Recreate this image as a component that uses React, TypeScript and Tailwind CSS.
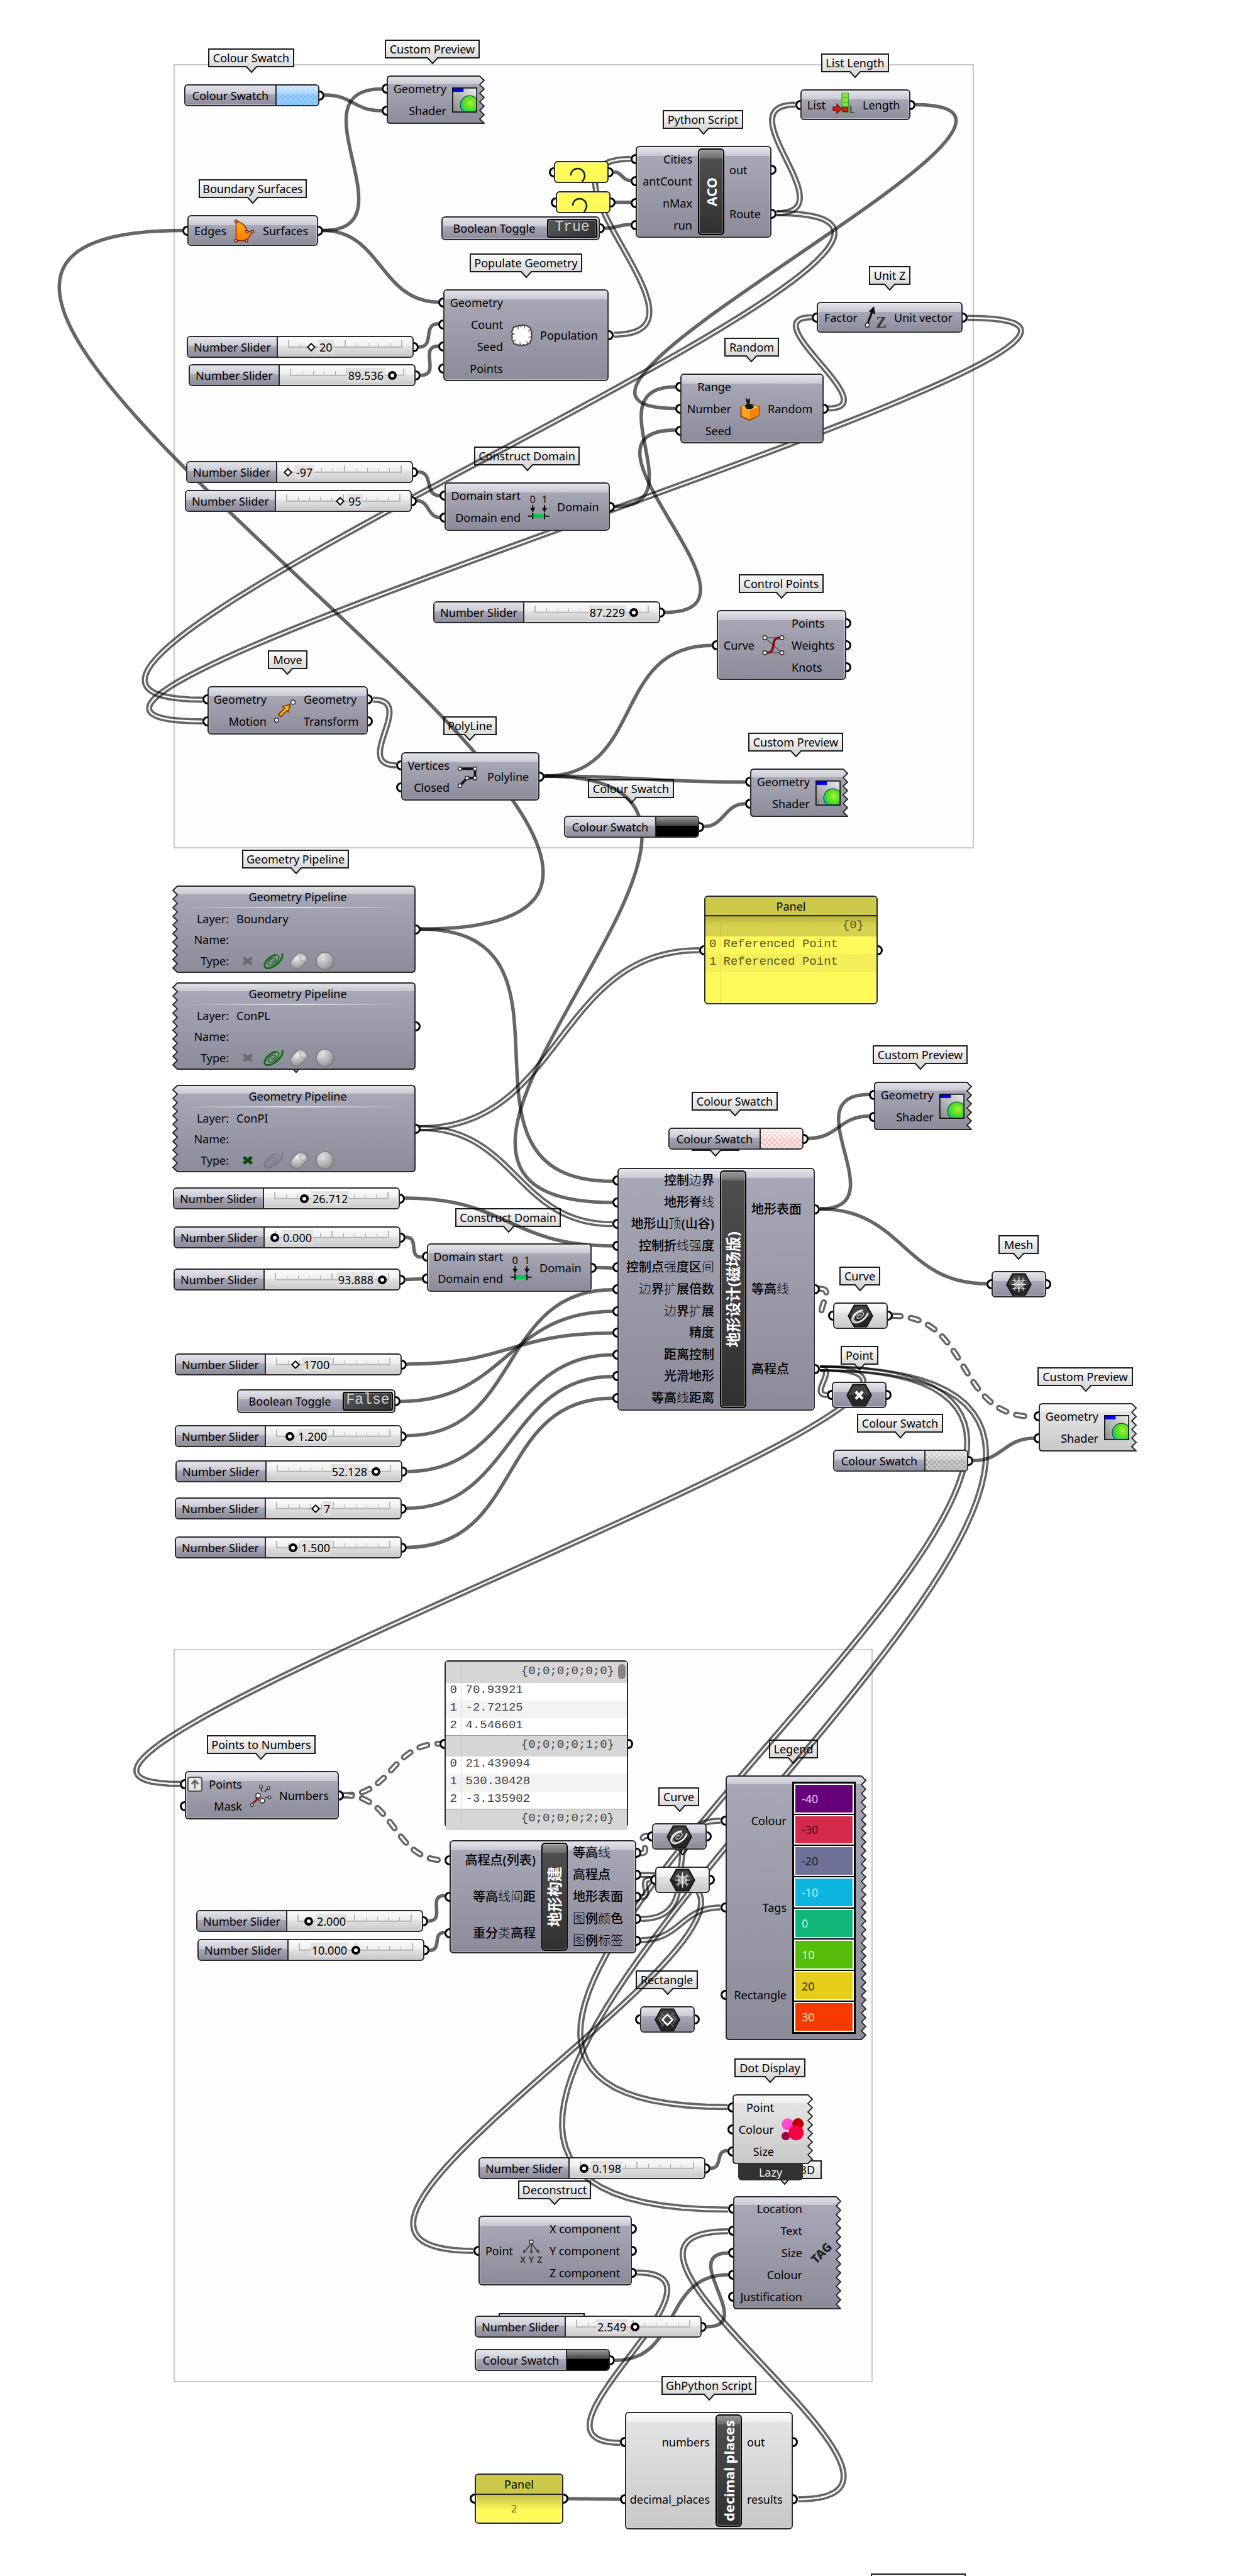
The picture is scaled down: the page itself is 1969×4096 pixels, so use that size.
import React from "react";

/* Canvas zoom: every node, label and wire below is stored in canvas units. */
const ZOOM = 0.8624;
const u = (n: number) => Math.round(n * ZOOM);
const box = (x: number, y: number, w: number, h: number) => ({
  left: u(x),
  top: u(y),
  width: u(w),
  height: u(h),
});

type Tone = "grey" | "light";

const FILL: Record<Tone, string> = {
  grey: "bg-[linear-gradient(180deg,#e4e4eb_0px,#c9c9d2_14px,#a8a7b6_14px,#8c8b9a_100%)]",
  light: "bg-[linear-gradient(180deg,#fbfbfb_0px,#efefef_14px,#e4e4e4_14px,#c8c8c8_100%)]",
};
const GLOSS = "bg-[linear-gradient(180deg,rgba(255,255,255,0.6)_0px,rgba(255,255,255,0.25)_14px,rgba(255,255,255,0)_14px)]";
const FRAME = "rounded-md border-2 border-[#2a2a2a] shadow-[inset_0_0_0_1px_rgba(255,255,255,0.45)]";

/* ---------------------------------------------------------------- wires */

type Kind = "item" | "list" | "tree";
type Wire = [number, number, number, number, Kind, number?];

const WIRES: Wire[] = [
  [598, 175, 704, 204, "item"],
  [596, 425, 704, 164, "item", 168],
  [596, 425, 809, 557, "item"],
  [772, 640, 809, 597, "item"],
  [776, 692, 809, 638, "item"],
  [1132, 617, 1163, 293, "list"],
  [1132, 317, 1163, 333, "item"],
  [1134, 373, 1163, 373, "item"],
  [1115, 421, 1163, 414, "item"],
  [1432, 393, 1467, 193, "list"],
  [1432, 393, 374, 1290, "list", 620],
  [1688, 193, 1246, 753, "item", 380],
  [1527, 753, 1497, 585, "list"],
  [1784, 586, 374, 1330, "list", 640],
  [1226, 1129, 1246, 793, "item"],
  [1134, 934, 1246, 713, "item"],
  [770, 870, 812, 914, "item"],
  [768, 923, 812, 954, "item"],
  [688, 1290, 731, 1411, "list"],
  [1004, 1431, 1313, 1190, "item"],
  [1004, 1431, 1374, 1442, "item"],
  [1004, 1431, 1130, 2217, "item", 568],
  [1298, 1524, 1374, 1482, "item"],
  [774, 1713, 337, 425, "item", 935],
  [774, 1713, 1130, 2178, "item"],
  [774, 2080, 1290, 1752, "list"],
  [774, 2080, 1130, 2257, "list"],
  [746, 2209, 1130, 2297, "item"],
  [748, 2281, 778, 2318, "item"],
  [748, 2359, 778, 2358, "item"],
  [1100, 2337, 1130, 2338, "item"],
  [750, 2515, 1130, 2458, "item"],
  [738, 2584, 1130, 2418, "item"],
  [750, 2647, 1130, 2378, "item"],
  [752, 2713, 1130, 2498, "item"],
  [750, 2781, 1130, 2538, "item"],
  [750, 2853, 1130, 2578, "item"],
  [1490, 2099, 1603, 2058, "item"],
  [1512, 2229, 1603, 2018, "item"],
  [1512, 2229, 1820, 2367, "item"],
  [1512, 2376, 1527, 2426, "tree"],
  [1646, 2426, 1907, 2612, "tree"],
  [1512, 2523, 1525, 2572, "list"],
  [1512, 2523, 332, 3289, "list", 525],
  [1512, 2523, 1342, 3885, "list", 1005],
  [1512, 2523, 1343, 4074, "list", 1125],
  [1794, 2693, 1907, 2652, "item"],
  [1182, 3417, 1193, 3385, "tree"],
  [1182, 3457, 873, 4150, "list", 482],
  [1182, 3498, 1199, 3465, "list"],
  [1182, 3538, 1329, 3357, "list"],
  [1182, 3577, 1329, 3517, "list"],
  [634, 3310, 811, 3215, "tree"],
  [634, 3310, 820, 3430, "tree"],
  [790, 3542, 820, 3495, "item"],
  [792, 3596, 820, 3563, "item"],
  [1310, 3998, 1342, 3965, "item"],
  [1174, 4190, 1144, 4504, "list"],
  [1472, 4608, 1343, 4114, "list", 335],
  [1304, 4290, 1343, 4154, "item"],
  [1134, 4352, 1343, 4194, "item"],
  [1047, 4607, 1144, 4608, "item"],
];

/* Polyline running parallel to a horizontal-tangent bezier. */
function parallel([x0, y0, x1, y1]: Wire, d: number, offset: number) {
  const pts: string[] = [];
  const n = 72;
  for (let i = 0; i <= n; i++) {
    const t = i / n;
    const s = 1 - t;
    const x = s * s * s * x0 + 3 * s * s * t * (x0 + d) + 3 * s * t * t * (x1 - d) + t * t * t * x1;
    const y = s * s * s * y0 + 3 * s * s * t * y0 + 3 * s * t * t * y1 + t * t * t * y1;
    const dx = 3 * s * s * d + 6 * s * t * (x1 - d - (x0 + d)) + 3 * t * t * d;
    const dy = 6 * s * t * (y1 - y0);
    const len = Math.hypot(dx, dy) || 1;
    pts.push(`${(x - (dy / len) * offset).toFixed(1)} ${(y + (dx / len) * offset).toFixed(1)}`);
  }
  return "M" + pts.join("L");
}

function WireLayer() {
  return (
    <svg className="absolute inset-0 h-full w-full" fill="none" aria-hidden="true">
      <g transform={`scale(${ZOOM})`}>
        {WIRES.map((w, i) => {
          const [x0, y0, x1, y1, kind, reach] = w;
          const d = reach ?? Math.max((x1 - x0) / 2, Math.abs(y1 - y0) * 0.65 + Math.abs(x1 - x0) * 0.1);
          const path = `M${x0} ${y0}C${x0 + d} ${y0} ${x1 - d} ${y1} ${x1} ${y1}`;
          if (kind === "item") return <path key={i} d={path} stroke="#000" strokeOpacity=".6" strokeWidth="6.4" />;
          if (kind === "tree")
            return (
              <g key={i} strokeLinecap="round" strokeDasharray="15 19">
                <path d={path} stroke="#666" strokeWidth="11.4" />
                <path d={path} stroke="#fff" strokeWidth="3.6" />
              </g>
            );
          return (
            <g key={i} stroke="#000" strokeOpacity=".6" strokeWidth="4.2">
              <path d={parallel(w, d, 3.6)} />
              <path d={parallel(w, d, -3.6)} />
            </g>
          );
        })}
      </g>
    </svg>
  );
}

/* --------------------------------------------------------------- labels */

type Tag = [string, number, number, number, number];

/* Tags with no text are the ones whose face is covered by a node. */
const TAGS: Tag[] = [
  ["Colour Swatch", 384, 89, 159, 464],
  ["Custom Preview", 710, 73, 175, 798],
  ["Boundary Surfaces", 366, 331, 199, 466],
  ["Populate Geometry", 866, 467, 207, 970],
  ["Python Script", 1222, 203, 149, 1297],
  ["List Length", 1514, 99, 125, 1577],
  ["Unit Z", 1602, 491, 77, 1640],
  ["Random", 1336, 623, 101, 1386],
  ["Construct Domain", 874, 823, 195, 972],
  ["Move", 494, 1199, 73, 530],
  ["PolyLine", 818, 1321, 99, 867],
  ["Colour Swatch", 1084, 1437, 159, 1164],
  ["Control Points", 1362, 1059, 157, 1441],
  ["Custom Preview", 1380, 1351, 175, 1468],
  ["Geometry Pipeline", 446, 1567, 197, 546],
  ["", 448, 1933, 197, 547],
  ["", 1276, 2087, 88, 1320],
  ["Colour Swatch", 1276, 2013, 159, 1356],
  ["Custom Preview", 1610, 1927, 175, 1698],
  ["Construct Domain", 840, 2227, 195, 938],
  ["Curve", 1548, 2335, 75, 1586],
  ["Point", 1550, 2481, 69, 1585],
  ["Mesh", 1841, 2277, 74, 1878],
  ["Custom Preview", 1913, 2521, 176, 2002],
  ["Colour Swatch", 1580, 2607, 159, 1660],
  ["Points to Numbers", 382, 3199, 201, 482],
  ["", 956, 3328, 88, 1000],
  ["Legend", 1418, 3207, 91, 1463],
  ["Curve", 1214, 3295, 75, 1253],
  ["", 1222, 3376, 74, 1259],
  ["Rectangle", 1172, 3633, 115, 1231],
  ["Dot Display", 1354, 3795, 131, 1420],
  ["Text Tag 3D", 1378, 3983, 138, 1447],
  ["Deconstruct", 956, 4020, 135, 1023],
  ["", 920, 4265, 159, 1000],
  ["GhPython Script", 1220, 4381, 175, 1308],
  ["", 1606, 4745, 175, 1694],
];

function TagBubble({ tag: [text, x, y, w, tip] }: { tag: Tag }) {
  return (
    <div
      className="absolute flex items-center justify-center border-2 border-[#1a1a1a] bg-[linear-gradient(180deg,#fbfbfb,#dadada)] leading-none whitespace-nowrap"
      style={box(x, y, w, 35)}
    >
      {text}
      <svg className="absolute top-full h-3 w-5" style={{ left: u(tip - x) - 12 }} viewBox="0 0 20 12" aria-hidden="true">
        <path d="M0 -2H20V0H18L10 10L2 0H0Z" fill="#dadada" />
        <path d="M0 -1 1 0 10 10 19 0 20 -1" fill="none" stroke="#1a1a1a" strokeWidth="2" />
      </svg>
    </div>
  );
}

/* ---------------------------------------------------------------- icons */

const Dot = ({ x, y, r = 1.9 }: { x: number; y: number; r?: number }) => (
  <circle cx={x} cy={y} r={r} fill="#fff" stroke="#333" strokeWidth="1.1" />
);

/* Squashed spiral around (cx, cy), from angle a to b in turns. */
function spiral(cx: number, cy: number, rMax: number, squash: number, a: number, b: number, turns: number) {
  const pts: string[] = [];
  const steps = 48;
  for (let i = 0; i <= steps; i++) {
    const k = a + ((b - a) * i) / steps;
    const r = rMax * (0.12 + (0.88 * k) / turns);
    const t = k * Math.PI * 2;
    pts.push(`${(cx + r * Math.cos(t)).toFixed(1)} ${(cy - r * squash * Math.sin(t)).toFixed(1)}`);
  }
  return "M" + pts.join("L");
}

function PreviewIcon() {
  return (
    <svg className="size-10 shrink-0" viewBox="0 0 46 46" aria-hidden="true">
      <defs>
        <linearGradient id="pv-bg" x1="0" y1="1" x2="1" y2="0">
          <stop offset="0" stopColor="#8a8a8a" />
          <stop offset="1" stopColor="#ececec" />
        </linearGradient>
        <radialGradient id="pv-ball" cx=".55" cy=".4" r=".62">
          <stop offset="0" stopColor="#b4f660" />
          <stop offset=".2" stopColor="#84ea2c" />
          <stop offset=".6" stopColor="#50dc20" />
          <stop offset=".85" stopColor="#14c878" />
          <stop offset="1" stopColor="#20d8d0" />
        </radialGradient>
        <clipPath id="pv-clip">
          <rect x="1" y="1" width="44" height="44" />
        </clipPath>
      </defs>
      <rect x="1" y="1" width="44" height="44" fill="url(#pv-bg)" />
      <rect x="1" y="1" width="20" height="7" fill="#0404f4" />
      <g clipPath="url(#pv-clip)">
        <circle cx="32" cy="32" r="17" fill="url(#pv-ball)" stroke="#14505c" strokeWidth="1.500" />
      </g>
      <rect x="1" y="1" width="44" height="44" fill="none" stroke="#111" strokeWidth="2" />
    </svg>
  );
}

function Glyph({ children }: { children: React.ReactNode }) {
  return (
    <svg className="size-9 shrink-0 overflow-visible" viewBox="0 0 24 24" fill="none" aria-hidden="true">
      {children}
    </svg>
  );
}

const BoundaryIcon = () => (
  <Glyph>
    <defs>
      <linearGradient id="bd" x1="0" y1="0" x2="0" y2="1">
        <stop offset="0" stopColor="#ffb01c" />
        <stop offset="1" stopColor="#ff7800" />
      </linearGradient>
    </defs>
    <path d="M3 2C9 2.500 14 7 14.500 13H20.500L14 22.500H3Z" fill="url(#bd)" stroke="#8a3000" strokeWidth="1" />
    {[[3, 2], [14.5, 13], [20.5, 13], [14, 22.5], [3, 22.5]].map(([x, y]) => (
      <circle key={`${x}-${y}`} cx={x} cy={y} r="1.400" fill="#eab0b0" stroke="#6a1010" strokeWidth=".9" />
    ))}
  </Glyph>
);

const PopulateIcon = () => (
  <Glyph>
    <path
      d="M8 3Q9 .5 11 2Q13 .2 14.500 2Q17 .5 18.500 3Q21.500 3 21 6Q23.500 8 21.800 10Q23.500 12 21.800 14Q23.500 16.500 21 18Q21 21.500 18 21Q16.500 23.500 14 22Q12 24 10 22Q8 23.500 6 21.500Q2.500 22 3 18.500Q.5 17 2 14.500Q.5 12.500 2.500 10.500Q0 8 2.500 6.500Q2 3 5 3.200Q6.500 1.500 8 3Z"
      fill="#fff"
      stroke="#3c3c3c"
      strokeWidth="1.300"
    />
    <path d="M8 3.500V6M11 2.500V4M15 2.500V5M21 7 18.500 8M21.500 14H19M18 20.500 17 18M10 21.500V19.500M3.500 18 5.500 17M3 10.500 5 11" stroke="#777" strokeWidth="1" />
  </Glyph>
);

const ListLengthIcon = () => (
  <Glyph>
    <rect x="9" y="-1" width="7.500" height="21" fill="#2c8a18" />
    {[-0.6, 4.3, 9.2].map((y) => (
      <rect key={y} x="9.600" y={y} width="6.300" height="4.300" fill="#84e63c" />
    ))}
    <rect x="10" y="14.500" width="5.500" height="4.500" fill="#e01818" stroke="#7a0808" strokeWidth=".6" />
    <path d="M0 14H4V11L9 16L4 21V18H0Z" fill="#d81818" stroke="#6a0606" strokeWidth=".8" />
    <text x="17" y="20.500" fontSize="11" fontWeight="600" fill="#444" className="font-['Noto_Sans']">L</text>
  </Glyph>
);

const UnitZIcon = () => (
  <Glyph>
    <path d="M3 19 8 6" stroke="#111" strokeWidth="2.200" />
    <path d="M10 0 11.500 8.500 4.500 5.500Z" fill="#111" />
    <Dot x={3} y={20} r={2.2} />
    <text x="12" y="22.500" fontSize="17" fontWeight="700" fill="#3a3a3a" className="font-['Liberation_Serif']">Z</text>
  </Glyph>
);

const RandomIcon = () => (
  <Glyph>
    <path d="M3 10 12 7 22 10V19L12 24 3 20Z" fill="#ffa418" stroke="#8a3400" strokeWidth="1.200" />
    <path d="M3 10 12 14 22 10 12 7Z" fill="#ffc24a" />
    <path d="M12 14 22 10V19L12 23.500Z" fill="#f58208" />
    <path d="M8 0 10.500 2.500 12.500 .5 12.500 5 11.500 6.500 16 8 16.500 11 13 12.500 8.500 12 7 9 9.500 7 8.500 4Z" fill="#161616" />
  </Glyph>
);

const DomainIcon = () => (
  <Glyph>
    <g fontSize="11" fontWeight="500" fill="#222" textAnchor="middle" className="font-['Noto_Sans']">
      <text x="5.500" y="8">0</text>
      <text x="18" y="8">1</text>
    </g>
    <path d="M5.500 10V17M18 10V17" stroke="#111" strokeWidth="1.300" />
    <path d="M2.800 13H8.200L5.500 18ZM15.300 13H20.700L18 18Z" fill="#111" />
    <rect x="6" y="19.500" width="12" height="4.500" fill="#00c850" />
    <path d="M.5 21.800H5.500M18 21.800H23M5.500 18.500V25M18 18.500V25" stroke="#111" strokeWidth="1.400" />
  </Glyph>
);

const ControlPointsIcon = () => (
  <Glyph>
    <path d="M3 4H21L3 4 21 20H3" stroke="#555" strokeWidth="1" />
    <path d="M3 20C11 20 11 18 12 12S13 4 21 4" stroke="#8c1010" strokeWidth="2.600" />
    <Dot x={3} y={4} r={2.1} />
    <Dot x={21} y={4} r={2.1} />
    <Dot x={3} y={20} r={2.1} />
    <Dot x={21} y={20} r={2.1} />
  </Glyph>
);

const MoveIcon = () => (
  <Glyph>
    <path d="M4.500 16 11 9.500 9 7.500 17 5.500 15 13.500 13.500 12 7 18.500Z" fill="#ffb000" stroke="#7a4000" strokeWidth="1.200" />
    <Dot x={2.500} y={22} r={2.3} />
    <Dot x={20} y={3} r={2.3} />
  </Glyph>
);

const PolylineIcon = () => (
  <Glyph>
    <path d="M3 3.500H19V13.500H10.500L3 21.500" stroke="#111" strokeWidth="2.600" />
    <Dot x={3} y={3.500} />
    <Dot x={19} y={3.500} />
    <Dot x={19} y={13.500} />
    <Dot x={10.500} y={13.500} />
    <Dot x={3} y={21.500} />
  </Glyph>
);

const PointsIcon = () => (
  <Glyph>
    <path d="M12 2 13 8M20 4 16 8M21 14H16" stroke="#444" strokeWidth="1.400" />
    <path d="M2 22 8 16" stroke="#8c1c1c" strokeWidth="1.800" />
    <path d="M10 13.500 9.500 18.500 5.500 14.500Z" fill="#8c1c1c" />
    <Dot x={12} y={2.5} r={1.5} />
    <Dot x={20} y={4} r={1.5} />
    <Dot x={21} y={14} r={1.5} />
    <Dot x={9} y={12} r={2.4} />
    <Dot x={13.500} y={17.500} r={2.4} />
    <Dot x={2.500} y={22} r={1.5} />
  </Glyph>
);

const XyzIcon = () => (
  <Glyph>
    <path d="M12 4 5 13M12 4V13M12 4 19 13" stroke="#444" strokeWidth="1.300" />
    <path d="M3 14.500 4 10.500 7 13ZM10 12H14L12 15.500ZM21 14.500 17 13 20 10.500Z" fill="#444" />
    <Dot x={12} y={2.500} r={2} />
    <g fontSize="9" fontWeight="600" fill="#333" textAnchor="middle" className="font-['Noto_Sans']">
      <text x="3" y="24.500">X</text>
      <text x="12" y="24.500">Y</text>
      <text x="21" y="24.500">Z</text>
    </g>
  </Glyph>
);

const TagIcon = () => (
  <Glyph>
    <text x="12" y="17" fontSize="13" fontWeight="800" fill="#222" textAnchor="middle" transform="rotate(-45 12 12)" className="font-['Noto_Sans']">
      TAG
    </text>
  </Glyph>
);

const DotsIcon = () => (
  <Glyph>
    <circle cx="6.500" cy="6.500" r="6.300" fill="#ff4ad0" />
    <circle cx="17.500" cy="6" r="6" fill="#c00000" />
    <circle cx="4.500" cy="19" r="4.500" fill="#a00048" />
    <circle cx="15.500" cy="15.500" r="8" fill="#f80040" />
  </Glyph>
);

type HexKind = "curve" | "mesh" | "point" | "rect";

function HexIcon({ kind }: { kind: HexKind }) {
  return (
    <svg className="h-[37px] w-[41px]" viewBox="0 0 47 42" fill="none" aria-hidden="true">
      <path d="M1 21 12 1H35L46 21 35 41H12Z" fill="#262626" stroke="#0c0c0c" strokeWidth="1.500" />
      <path d="M3.500 21 13.500 3.500H33.500L43.500 21Z" fill="#424242" />
      {kind === "point" && <path d="M17 14.500 30 27.500M30 14.500 17 27.500" stroke="#fff" strokeWidth="5" />}
      {kind === "curve" && (
        <g stroke="#ececec" strokeLinecap="round" transform="rotate(-38 23 21)">
          <path d={spiral(22, 20, 18, 0.56, 0, 1.6, 2.4)} strokeWidth="1.800" stroke="#c4c4c4" />
          <path d={spiral(22, 20, 18, 0.56, 1.6, 2.4, 2.4)} strokeWidth="3.200" transform="rotate(180 22 20)" />
        </g>
      )}
      {kind === "mesh" && (
        <g stroke="#e8e8e8" strokeWidth="2">
          <path d="M11 14H36M11 28H36M16 9V33M31 9V33" stroke="#b0b0b0" strokeWidth="1.500" />
          <path d="M10 21H37M23.500 7V35" />
          <path d="M14 12 33 30M33 12 14 30M16 21 23.500 28 31 21M16 21 23.500 14 31 21" strokeWidth="1.400" />
        </g>
      )}
      {kind === "rect" && (
        <g>
          <path d="M12 8 35 34M35 8 12 34M8 21 14 13M39 21 33 13M8 21 14 29M39 21 33 29" stroke="#888" strokeWidth="1.500" />
          <path d="M23.500 11.500 33 21 23.500 30.500 14 21Z" fill="#444" stroke="#fff" strokeWidth="3" />
        </g>
      )}
    </svg>
  );
}

/* ---------------------------------------------------------------- nodes */

const Port = ({ side }: { side: "in" | "out" }) => (
  <span
    className={
      side === "in"
        ? "absolute top-1/2 -left-2.5 h-4 w-2 -translate-y-1/2 rounded-l-full border-[3px] border-r-0 border-black bg-white"
        : "absolute top-1/2 -right-2.5 h-4 w-2 -translate-y-1/2 rounded-r-full border-[3px] border-l-0 border-black bg-white"
    }
  />
);

const LIGHT_GLYPHS = "边线顶强间扩图颜标签类";

function PortName({ text }: { text: string }) {
  if (!/[\u4e00-\u9fff]/.test(text)) return <span>{text}</span>;
  return (
    <span className="text-xl leading-none">
      {[...text].map((c, i) => (
        <span key={i} className={LIGHT_GLYPHS.includes(c) ? "font-light" : "font-medium"}>
          {c}
        </span>
      ))}
    </span>
  );
}

type Spec = {
  at: [number, number, number, number];
  ins?: string[];
  outs?: string[];
  inW?: number;
  outX?: number;
  icon?: React.ReactNode;
  bar?: string;
  tone?: Tone;
  torn?: boolean;
  graft?: boolean;
};

/* Points of a sawtooth edge, top to bottom. */
function teeth(h: number, tip: number, root: number) {
  const n = Math.max(1, Math.round(h / 7));
  const pts: [number, number][] = [];
  for (let i = 0; i <= n; i++) pts.push([i % 2 ? tip : root, (h * i) / n]);
  return pts;
}

function TornBody({ w, h, tone, side }: { w: number; h: number; tone: Tone; side: "left" | "right" }) {
  const edge = side === "right" ? teeth(h - 2, w - 1, w - 8) : teeth(h - 2, 1, 8);
  const far = side === "right" ? 1 : w - 1;
  const near = side === "right" ? 6 : w - 6;
  const pts = edge.map(([x, y]) => `${x} ${(y + 1).toFixed(1)}`);
  const d = `M${pts.join("L")}L${near} ${h - 1}Q${far} ${h - 1} ${far} ${h - 6}V6Q${far} 1 ${near} 1Z`;
  return (
    <span className="absolute inset-0">
      <span className={`absolute inset-0 ${FILL[tone]}`} style={{ clipPath: `path("${d}")` }} />
      <svg className="absolute inset-0 h-full w-full" fill="none" aria-hidden="true">
        <path d={d} stroke="#2a2a2a" strokeWidth="2" strokeLinejoin="round" />
      </svg>
    </span>
  );
}

const DARK_BAR =
  "bg-[linear-gradient(180deg,#9a9a9a_0px,#6c6c6c_14px,#4e4e4e_14px,#303030_100%)] rounded-md border-2 border-black shadow-[inset_0_0_0_1px_rgba(255,255,255,0.35)]";

function Component({ at, ins = [], outs = [], inW = 0, outX, icon, bar, tone = "grey", torn, graft }: Spec) {
  const [x, y, w, h] = at;
  const cjkBar = bar && /[\u4e00-\u9fff]/.test(bar);
  return (
    <section className={`absolute flex py-px ${torn ? "border-2 border-transparent" : `${FRAME} ${FILL[tone]}`}`} style={box(x, y, w, h)}>
      {torn && (
        <span className="absolute -inset-0.5">
          <TornBody w={u(w)} h={u(h)} tone={tone} side="right" />
        </span>
      )}
      <ul className="relative flex shrink-0 flex-col" style={{ width: u(inW) - 2 }}>
        {ins.map((name, i) => (
          <li key={name} className="relative flex flex-1 items-center justify-end leading-none whitespace-nowrap">
            <Port side="in" />
            {graft && i === 0 && (
              <span className="mr-auto ml-0.5 flex size-6 shrink-0 items-center justify-center rounded border-2 border-[#555] bg-[#e6e6e6]">
                <svg className="size-4" viewBox="0 0 16 16" fill="none" aria-hidden="true">
                  <path d="M8 15V2M2.500 8 8 2 13.500 8" stroke="#666" strokeWidth="2.600" />
                </svg>
              </span>
            )}
            <PortName text={name} />
          </li>
        ))}
      </ul>
      <div className="relative flex shrink-0 items-center justify-center py-px" style={{ width: u((outX ?? w) - inW) }}>
        {icon}
        {bar && (
          <span className={`flex h-full w-[42px] items-center justify-center ${DARK_BAR}`}>
            <span
              className={`rotate-180 leading-none font-bold whitespace-nowrap text-white [text-orientation:sideways] [writing-mode:vertical-rl] ${cjkBar ? "text-2xl" : "text-[22px]"}`}
            >
              {bar}
            </span>
          </span>
        )}
      </div>
      <ul className="relative flex min-w-0 flex-1 flex-col">
        {outs.map((name) => (
          <li key={name} className="relative flex flex-1 items-center leading-none whitespace-nowrap">
            <PortName text={name} />
            <Port side="out" />
          </li>
        ))}
      </ul>
    </section>
  );
}

const PREVIEW = { ins: ["Geometry", "Shader"], inW: 110, outX: 176, torn: true, icon: <PreviewIcon /> };
const DOMAIN = { ins: ["Domain start", "Domain end"], outs: ["Domain"], inW: 140, outX: 207, icon: <DomainIcon /> };

const COMPONENTS: Spec[] = [
  { at: [713, 139, 181, 89], ...PREVIEW },
  { at: [346, 397, 241, 57], ins: ["Edges"], outs: ["Surfaces"], inW: 72, outX: 139, icon: <BoundaryIcon /> },
  { at: [818, 533, 305, 169], ins: ["Geometry", "Count", "Seed", "Points"], outs: ["Population"], inW: 110, outX: 178, icon: <PopulateIcon /> },
  { at: [1172, 269, 251, 169], ins: ["Cities", "antCount", "nMax", "run"], outs: ["out", "Route"], inW: 104, outX: 172, bar: "ACO" },
  { at: [1476, 165, 203, 57], ins: ["List"], outs: ["Length"], inW: 46, outX: 114, icon: <ListLengthIcon /> },
  { at: [1506, 557, 269, 57], ins: ["Factor"], outs: ["Unit vector"], inW: 75, outX: 142, icon: <UnitZIcon /> },
  { at: [1255, 689, 264, 129], ins: ["Range", "Number", "Seed"], outs: ["Random"], inW: 94, outX: 161, icon: <RandomIcon /> },
  { at: [820, 889, 305, 89], ...DOMAIN },
  { at: [1322, 1125, 239, 129], ins: ["Curve"], outs: ["Points", "Weights", "Knots"], inW: 70, outX: 138, icon: <ControlPointsIcon /> },
  { at: [383, 1265, 296, 89], ins: ["Geometry", "Motion"], outs: ["Geometry", "Transform"], inW: 109, outX: 177, icon: <MoveIcon /> },
  { at: [740, 1387, 255, 89], ins: ["Vertices", "Closed"], outs: ["Polyline"], inW: 89, outX: 158, icon: <PolylineIcon /> },
  { at: [1383, 1417, 181, 89], ...PREVIEW },
  { at: [787, 2293, 304, 89], ...DOMAIN },
  {
    at: [1139, 2153, 364, 448],
    ins: ["控制边界", "地形脊线", "地形山顶(山谷)", "控制折线强度", "控制点强度区间", "边界扩展倍数", "边界扩展", "精度", "距离控制", "光滑地形", "等高线距离"],
    outs: ["地形表面", "等高线", "高程点"],
    inW: 179,
    outX: 247,
    bar: "地形设计(磁场版)",
  },
  { at: [1612, 1994, 181, 89], ...PREVIEW },
  { at: [1916, 2587, 181, 89], ...PREVIEW, tone: "light" },
  { at: [341, 3265, 284, 89], ins: ["Points", "Mask"], outs: ["Numbers"], inW: 105, outX: 173, icon: <PointsIcon />, graft: true },
  {
    at: [829, 3393, 344, 209],
    ins: ["高程点(列表)", "等高线间距", "重分类高程"],
    outs: ["等高线", "高程点", "地形表面", "图例颜色", "图例标签"],
    inW: 159,
    outX: 227,
    bar: "地形构建",
  },
  { at: [1351, 3861, 148, 129], ins: ["Point", "Colour", "Size"], inW: 77, outX: 145, icon: <DotsIcon />, tone: "light", torn: true },
  { at: [882, 4085, 283, 129], ins: ["Point"], outs: ["X component", "Y component", "Z component"], inW: 64, outX: 131, icon: <XyzIcon /> },
  { at: [1352, 4049, 200, 209], ins: ["Location", "Text", "Size", "Colour", "Justification"], inW: 127, outX: 195, icon: <TagIcon />, torn: true },
  { at: [1153, 4447, 310, 217], ins: ["numbers", "decimal_places"], outs: ["out", "results"], inW: 157, outX: 225, bar: "decimal places", tone: "light" },
];

const PARAMS: [number, number, HexKind, Tone][] = [
  [1829, 2343, "mesh", "grey"],
  [1536, 2401, "curve", "light"],
  [1534, 2547, "point", "grey"],
  [1202, 3361, "curve", "grey"],
  [1208, 3441, "mesh", "light"],
  [1180, 3699, "rect", "grey"],
];

function Param({ spec: [x, y, kind, tone] }: { spec: [number, number, HexKind, Tone] }) {
  return (
    <div className={`absolute flex items-center justify-center ${FRAME} ${FILL[tone]}`} style={box(x, y, 101, 49)}>
      <Port side="in" />
      <HexIcon kind={kind} />
      <Port side="out" />
    </div>
  );
}

/* -------------------------------------------------------------- sliders */

type SliderSpec = { at: [number, number]; knob: number; value: string; whole?: boolean; before?: boolean };

const SLIDERS: SliderSpec[] = [
  { at: [344, 619], knob: 573, value: "20", whole: true },
  { at: [348, 671], knob: 724, value: "89.536", before: true },
  { at: [343, 850], knob: 531, value: "-97", whole: true },
  { at: [341, 903], knob: 627, value: "95", whole: true },
  { at: [799, 1109], knob: 1169, value: "87.229", before: true },
  { at: [319, 2189], knob: 561, value: "26.712" },
  { at: [320, 2261], knob: 506, value: "0.000" },
  { at: [320, 2339], knob: 705, value: "93.888", before: true },
  { at: [322, 2495], knob: 544, value: "1700", whole: true },
  { at: [322, 2627], knob: 534, value: "1.200" },
  { at: [324, 2693], knob: 694, value: "52.128", before: true },
  { at: [322, 2761], knob: 582, value: "7", whole: true },
  { at: [322, 2833], knob: 540, value: "1.500" },
  { at: [362, 3521], knob: 570, value: "2.000" },
  { at: [364, 3575], knob: 656, value: "10.000", before: true },
  { at: [882, 3977], knob: 1077, value: "0.198" },
  { at: [876, 4269], knob: 1171, value: "2.549", before: true },
];

function Slider({ spec }: { spec: SliderSpec }) {
  const [x, y] = spec.at;
  const pos = u(spec.knob - x - 168);
  const id = `slider-${x}-${y}`;
  const span = u(213);
  const share = Math.round(((pos - 17) / span) * 100);
  return (
    <div className={`absolute flex ${FRAME} ${FILL.light}`} style={box(x, y, 419, 41)}>
      <label
        htmlFor={id}
        className={`flex w-[143px] shrink-0 items-center justify-center rounded-l border-r-2 border-[#2a2a2a] leading-none whitespace-nowrap ${FILL.grey}`}
      >
        Number Slider
      </label>
      <div className="relative flex-1">
        <div className="absolute top-[6px] right-4 left-4 flex h-[11px] items-end justify-between border-b-2 border-[#b8b8b8]">
          {Array.from({ length: 11 }, (_, i) => (
            <span key={i} className={i % 5 ? "h-1.5 w-px bg-[#acacac]" : "h-2.5 w-0.5 bg-[#b8b8b8]"} />
          ))}
        </div>
        <output
          htmlFor={id}
          className="absolute inset-y-1 flex items-center bg-[#dedede]/80 px-0.5 leading-none"
          style={spec.before ? { right: 214 - pos + 12 } : { left: pos + 11 }}
        >
          {spec.value}
        </output>
        <span className="absolute top-1/2 flex size-3.5 -translate-x-1/2 -translate-y-1/2 items-center justify-center" style={{ left: pos }}>
          {spec.whole ? (
            <span className="size-[10px] rotate-45 border-2 border-black bg-white" />
          ) : (
            <span className="size-3.5 rounded-full border-4 border-black bg-white" />
          )}
        </span>
        <input id={id} type="range" defaultValue={share} className="absolute inset-0 w-full opacity-0" />
      </div>
      <Port side="out" />
    </div>
  );
}

/* ------------------------------------------------------------- swatches */

const SWATCH: Record<string, string> = {
  blue: "bg-[repeating-conic-gradient(#84c0f6_0_25%,#96cfff_0_50%)] bg-[length:8px_8px]",
  black: "bg-black",
  pink: "bg-[repeating-conic-gradient(#f3c4c4_0_25%,#fbe8e8_0_50%)] bg-[length:8px_8px]",
  grey: "bg-[repeating-conic-gradient(#adadad_0_25%,#cdcdcd_0_50%)] bg-[length:8px_8px]",
};

const SWATCHES: [number, number, string][] = [
  [340, 155, "blue"],
  [1040, 1504, "black"],
  [1233, 2079, "pink"],
  [1536, 2673, "grey"],
  [876, 4331, "black"],
];

function Swatch({ spec: [x, y, colour] }: { spec: [number, number, string] }) {
  return (
    <div className={`absolute flex ${FRAME} ${FILL.grey}`} style={box(x, y, 249, 41)}>
      <span className="flex w-[143px] shrink-0 items-center justify-center leading-none whitespace-nowrap">Colour Swatch</span>
      <button type="button" aria-label={`${colour} swatch`} className={`relative flex-1 rounded-r border-l-2 border-[#2a2a2a] ${SWATCH[colour]}`}>
        <span className={`absolute inset-0 rounded-r ${GLOSS}`} />
      </button>
      <Port side="out" />
    </div>
  );
}

function Toggle({ x, y, on }: { x: number; y: number; on: boolean }) {
  return (
    <div className={`absolute flex items-center p-0.5 ${FRAME} ${FILL.grey}`} style={box(x, y, 292, 44)}>
      <span className="flex-1 pl-2 text-center leading-none whitespace-nowrap">Boolean Toggle</span>
      <button
        type="button"
        className="ml-3 h-full w-[80px] rounded border-2 border-black bg-[linear-gradient(135deg,#585858,#303030)] pb-1 font-['Liberation_Mono',monospace] text-[23px] leading-none text-[#d4d4d4] shadow-[inset_0_0_0_1px_#777]"
      >
        {on ? "True" : "False"}
      </button>
      <Port side="out" />
    </div>
  );
}

/* --------------------------------------------------------------- panels */

const MONO = "font-['Liberation_Mono','Courier_New',monospace] text-[19px] leading-none";

function ScribblePanel({ x, y }: { x: number; y: number }) {
  return (
    <div className={`absolute bg-[#fff95a] ${FRAME}`} style={box(x, y, 101, 41)}>
      <Port side="in" />
      <svg className="absolute bottom-0 left-5 h-6 w-8" viewBox="0 0 32 24" fill="none" aria-hidden="true">
        <path d="M5 14C5 7 10 3 16 3C22 3 27 8 27 15C27 18 25 21 23 24" stroke="#0a2e0a" strokeWidth="2.600" />
      </svg>
      <Port side="out" />
    </div>
  );
}

function PointPanel() {
  return (
    <div className={`absolute flex flex-col bg-[#fff95a] ${FRAME}`} style={box(1299, 1651, 320, 201)}>
      <Port side="in" />
      <h3 className="flex h-[31px] items-center justify-center rounded-t border-b-2 border-[#2a2a1a] bg-[#cbc84a] leading-none">Panel</h3>
      <table className={`h-0 w-full ${MONO} text-[#5a5820]`}>
        <tbody>
          <tr className="h-8 bg-[linear-gradient(180deg,#b4b13c,#cdc94b_30%,#d6d24f_50%)]">
            <td className="w-[24px] border-r border-[#bdb940]" />
            <td className="pr-5 pb-1 text-right">{"{0}"}</td>
          </tr>
          {[0, 1].map((i) => (
            <tr key={i} className={i ? "h-7 bg-[#f4ee58]" : "h-7"}>
              <td className="border-r border-[#e0da50] pb-1 text-center">{i}</td>
              <td className="pb-1 pl-1">Referenced Point</td>
            </tr>
          ))}
        </tbody>
      </table>
      <span className="ml-[23px] w-px flex-1 bg-[#e0da50]" />
      <Port side="out" />
    </div>
  );
}

const BRANCHES = [
  { path: "{0;0;0;0;0;0}", rows: ["70.93921", "-2.72125", "4.546601"] },
  { path: "{0;0;0;0;1;0}", rows: ["21.439094", "530.30428", "-3.135902"] },
  { path: "{0;0;0;0;2;0}", rows: [] },
];

function DataPanel() {
  return (
    <div className={`absolute bg-white ${FRAME}`} style={box(820, 3061, 339, 308)}>
      <Port side="in" />
      <table className={`w-full border-collapse ${MONO} text-[#444]`}>
        <tbody>
          {BRANCHES.map((b) => (
            <React.Fragment key={b.path}>
              <tr className="h-[33px] border-t border-[#9a9a9a] bg-[#d6d6d6]">
                <td className="w-[25px] border-r border-[#c2c2c2]" />
                <td className="pr-5 pb-1 text-right">{b.path}</td>
              </tr>
              {b.rows.map((r, i) => (
                <tr key={r} className={i === 1 ? "h-[28px] bg-[#f3f3f3]" : "h-[28px]"}>
                  <td className="border-r border-[#d8d8d8] pb-1 text-center">{i}</td>
                  <td className="pb-1 pl-1.5">{r}</td>
                </tr>
              ))}
            </React.Fragment>
          ))}
        </tbody>
      </table>
      <span className="absolute top-1 right-0.5 h-6 w-3 rounded-md bg-[#848484]" />
      <Port side="out" />
    </div>
  );
}

function PlacesPanel() {
  return (
    <div className={`absolute flex flex-col bg-[linear-gradient(180deg,#c8c448_34px,#fff95a_56px)] ${FRAME}`} style={box(875, 4561, 163, 93)}>
      <Port side="in" />
      <h3 className="flex h-8 items-center justify-center rounded-t border-b-2 border-[#2a2a1a] bg-[#cbc84a] leading-none">Panel</h3>
      <p className="flex h-11 items-center justify-center pr-4 text-base leading-none text-[#4f6a1c]">2</p>
      <Port side="out" />
    </div>
  );
}

/* ------------------------------------------------------------- pipeline */

const SurfaceIcon = () => (
  <svg className="size-8" viewBox="0 0 32 32" aria-hidden="true">
    <defs>
      <radialGradient id="blob" cx=".35" cy=".3" r=".8">
        <stop offset="0" stopColor="#ededed" />
        <stop offset="1" stopColor="#858585" />
      </radialGradient>
    </defs>
    <path d="M2 20C2 13 8 11 12 6 15 2 23 2 26 6L30 12C31 17 27 18 24 20 20 24 17 30 11 29 6 29 2 25 2 20Z" fill="url(#blob)" stroke="#7d7d80" strokeWidth="1.500" />
    <path d="M17 8C20 4 27 8 27 12 26 15 20 17 18 14Z" fill="#d4d4d4" stroke="#a0a0a0" />
  </svg>
);

const SphereIcon = () => (
  <svg className="size-8" viewBox="0 0 32 32" aria-hidden="true">
    <circle cx="16" cy="16" r="14" fill="url(#blob)" stroke="#7d7d80" strokeWidth="1.500" />
    <path d="M10 6V26M16 4V28M5 11H27M4 17H28M6 22H26" stroke="#b4b4b4" strokeWidth=".8" opacity=".7" />
  </svg>
);

function Pipeline({ y, layer, points }: { y: number; layer: string; points?: boolean }) {
  return (
    <section className="absolute flex flex-col border-2 border-transparent" style={box(318, y, 449, 161)}>
      <span className="absolute -inset-0.5">
        <TornBody w={u(449)} h={u(161)} tone="grey" side="left" />
      </span>
      <h3 className="relative flex h-8 shrink-0 items-center justify-center pl-3 leading-none">Geometry Pipeline</h3>
      <span className="relative h-0.5 shrink-0 bg-[linear-gradient(90deg,transparent_5%,#e8e8ee_50%,transparent_95%)]" />
      <dl className="relative grid min-h-0 flex-1 grid-cols-[88px_1fr] grid-rows-3 items-center gap-x-3 leading-none">
        <dt className="text-right">Layer:</dt>
        <dd>{layer}</dd>
        <dt className="text-right">Name:</dt>
        <dd />
        <dt className="text-right">Type:</dt>
        <dd className="flex items-center gap-[9px] pl-0.5">
          <svg className="size-8" viewBox="0 0 32 32" aria-hidden="true">
            <path d="M9.500 11 22.500 21M22.500 11 9.500 21" stroke={points ? "#0a4a0a" : "#6c6c6e"} strokeWidth="5" />
          </svg>
          <svg className="size-8 overflow-visible" viewBox="0 0 32 32" fill="none" aria-hidden="true">
            <g stroke={points ? "#7c7c80" : "#0c6a0c"} transform="rotate(-38 16 16)">
              <path d={spiral(15, 15, 19, 0.48, 0, 1.6, 2.5)} strokeWidth="1.600" transform="rotate(180 15 15)" />
              <path d={spiral(15, 15, 19, 0.48, 1.6, 2.5, 2.5)} strokeWidth="2.800" transform="rotate(180 15 15)" />
            </g>
          </svg>
          <SurfaceIcon />
          <SphereIcon />
        </dd>
      </dl>
      <Port side="out" />
    </section>
  );
}

/* --------------------------------------------------------------- legend */

const LEGEND: [string, string][] = [
  ["-40", "bg-[#660078] text-[#f2c4ff]"],
  ["-30", "bg-[#d42a4c] text-[#4a0614]"],
  ["-20", "bg-[#6f7196] text-[#1c1c30]"],
  ["-10", "bg-[#0eb5de] text-[#c4f2ff]"],
  ["0", "bg-[#10b678] text-[#bff5dc]"],
  ["10", "bg-[#56be0a] text-[#dcffc0]"],
  ["20", "bg-[#e6cd1a] text-[#3a3200]"],
  ["30", "bg-[#f53a00] text-[#ffe2b8]"],
];

function Legend() {
  return (
    <section className="absolute flex border-2 border-transparent py-px" style={box(1338, 3273, 260, 488)}>
      <span className="absolute -inset-0.5">
        <TornBody w={u(260)} h={u(488)} tone="grey" side="right" />
      </span>
      <ul className="relative flex w-[95px] flex-col">
        {["Colour", "Tags", "Rectangle"].map((name) => (
          <li key={name} className="relative flex flex-1 items-center justify-end leading-none">
            <Port side="in" />
            {name}
          </li>
        ))}
      </ul>
      <ol className="relative my-[7px] ml-[9px] flex w-[101px] flex-col gap-0.5 border-[3px] border-black bg-black">
        {LEGEND.map(([value, look]) => (
          <li key={value} className={`flex flex-1 items-center border-2 border-white pl-2.5 leading-none ${look}`}>
            {value}
          </li>
        ))}
      </ol>
    </section>
  );
}

/* ------------------------------------------------------------------ app */

const GROUPS: [number, number, number, number][] = [
  [320, 118, 1476, 1446],
  [320, 3040, 1290, 1352],
];

export default function App() {
  return (
    <main className="relative min-h-screen w-full overflow-hidden bg-white font-['Noto_Sans','Noto_Sans_CJK_SC',sans-serif] text-lg text-black">
      {GROUPS.map(([x, y, w, h]) => (
        <div key={y} className="absolute border-2 border-[#cacaca] bg-[#fdfdfd]" style={box(x, y, w, h)} />
      ))}
      {TAGS.map((t, i) => (
        <TagBubble key={i} tag={t} />
      ))}
      <WireLayer />
      {SWATCHES.map((s, i) => (
        <Swatch key={i} spec={s} />
      ))}
      {COMPONENTS.map((c, i) => (
        <Component key={i} {...c} />
      ))}
      {PARAMS.map((p, i) => (
        <Param key={i} spec={p} />
      ))}
      {SLIDERS.map((s, i) => (
        <Slider key={i} spec={s} />
      ))}
      <Toggle x={814} y={399} on />
      <Toggle x={437} y={2562} on={false} />
      <ScribblePanel x={1022} y={297} />
      <ScribblePanel x={1025} y={353} />
      <PointPanel />
      <DataPanel />
      <PlacesPanel />
      <Pipeline y={1633} layer="Boundary" />
      <Pipeline y={1811} layer="ConPL" />
      <Pipeline y={2000} layer="ConPI" points />
      <Legend />
      <div className="absolute flex items-center justify-center rounded-b-md bg-[#323232] leading-none text-[#f4f4f4]" style={box(1361, 3989, 119, 31)}>
        Lazy
      </div>
    </main>
  );
}
